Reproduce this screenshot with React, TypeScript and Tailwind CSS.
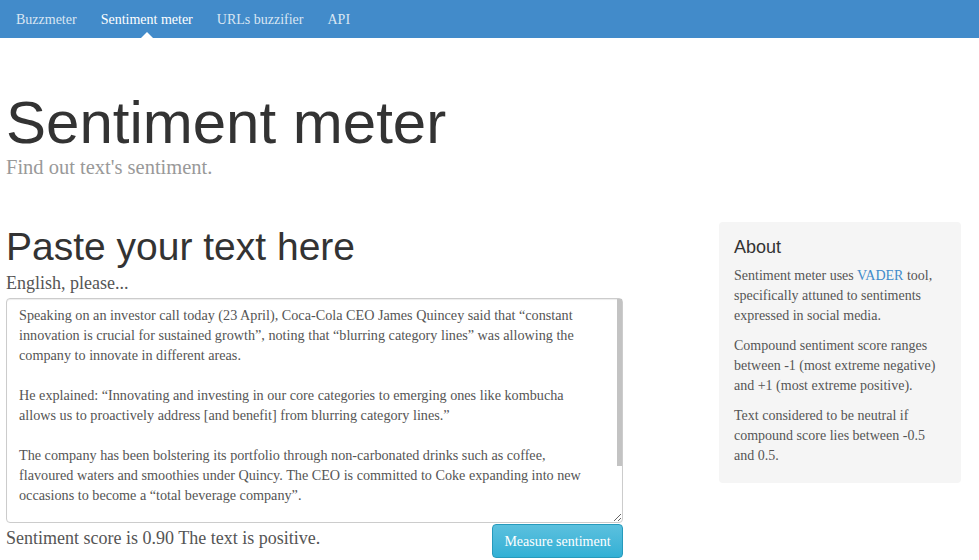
import { useState } from "react";

const serif = "font-['Liberation_Serif',serif]";
const sans = "font-['Liberation_Sans',Arial,sans-serif]";

const sample = `Speaking on an investor call today (23 April), Coca-Cola CEO James Quincey said that “constant innovation is crucial for sustained growth”, noting that “blurring category lines” was allowing the company to innovate in different areas.

He explained: “Innovating and investing in our core categories to emerging ones like kombucha allows us to proactively address [and benefit] from blurring category lines.”

The company has been bolstering its portfolio through non-carbonated drinks such as coffee, flavoured waters and smoothies under Quincy. The CEO is committed to Coke expanding into new occasions to become a “total beverage company”.

Quincey also said the company will keep looking at new categories.

`;

const links = ["Buzzmeter", "Sentiment meter", "URLs buzzifier", "API"];

export default function App() {
  const [text, setText] = useState(sample);

  return (
    <div className={`min-h-[560px] bg-white ${serif} text-[14px] text-[#555]`}>
      <nav className="h-[38px] bg-[#428bca] flex items-stretch px-[4px]">
        {links.map((l) => {
          const active = l === "Sentiment meter";
          return (
            <a
              key={l}
              href="#"
              className={`relative flex items-center px-[12px] text-[14px] ${
                active ? "text-white" : "text-[#d9e6f3]"
              }`}
            >
              {l}
              {active && (
                <span className="absolute bottom-0 left-1/2 -translate-x-1/2 w-0 h-0 border-x-[6px] border-x-transparent border-b-[6px] border-b-white" />
              )}
            </a>
          );
        })}
      </nav>

      <div className="pl-[6px] pt-[52px]">
        <h1 className={`${sans} text-[60px] leading-[66px] text-[#333]`}>Sentiment meter</h1>
        <p className="text-[20.5px] leading-[24px] text-[#999] mt-[-1px]">Find out text's sentiment.</p>
      </div>

      <div className="flex pl-[6px] pt-[43px]">
        <div className="w-[617px]">
          <h2 className={`${sans} text-[39px] leading-[43px] text-[#333] mt-[3px]`}>Paste your text here</h2>
          <label className="block text-[18px] text-[#555] leading-[24px] mt-[3px]">English, please...</label>
          <div className="relative mt-[3px]">
            <textarea
              value={text}
              onChange={(e) => setText(e.target.value)}
              className="block w-full h-[225px] resize-y overflow-y-scroll rounded-[4px] border border-[#ccc] pl-[12px] pr-[21px] py-[6px] text-[14.2px] leading-[20px] text-[#555] outline-none shadow-[inset_0_1px_1px_rgba(0,0,0,0.075)] [&::-webkit-scrollbar]:w-[6px] [&::-webkit-scrollbar-thumb]:bg-[#c1c1c1] [&::-webkit-scrollbar-track]:bg-transparent"
            />
            {/* scrollbar thumb */}
            <div className="absolute right-[1px] top-[1px] w-[5px] h-[167px] bg-[#c3c3c3] pointer-events-none" />
          </div>
          <div className="flex items-start justify-between">
            <p className="text-[18px] text-[#555] leading-[24px] mt-[3px]">
              Sentiment score is 0.90 The text is positive.
            </p>
            <button className="mt-[1px] h-[34px] w-[131px] rounded-[4px] border border-[#269abc] bg-gradient-to-b from-[#5bc0de] to-[#31b0d5] text-white text-[14px]">
              Measure sentiment
            </button>
          </div>
        </div>

        <div className="ml-[96px] w-[242px] h-[261px] rounded-[4px] bg-[#f5f5f5] px-[15px] pt-[14px]">
          <h3 className={`${sans} text-[18px] leading-[22px] text-[#333] mb-[8px]`}>About</h3>
          <p className="leading-[20px] mb-[10px]">
            Sentiment meter uses <a href="#" className="text-[#428bca]">VADER</a> tool, specifically attuned to sentiments expressed in social media.
          </p>
          <p className="leading-[20px] mb-[10px]">
            Compound sentiment score ranges between -1 (most extreme negative) and +1 (most extreme positive).
          </p>
          <p className="leading-[20px]">
            Text considered to be neutral if compound score lies between -0.5 and 0.5.
          </p>
        </div>
      </div>
    </div>
  );
}
